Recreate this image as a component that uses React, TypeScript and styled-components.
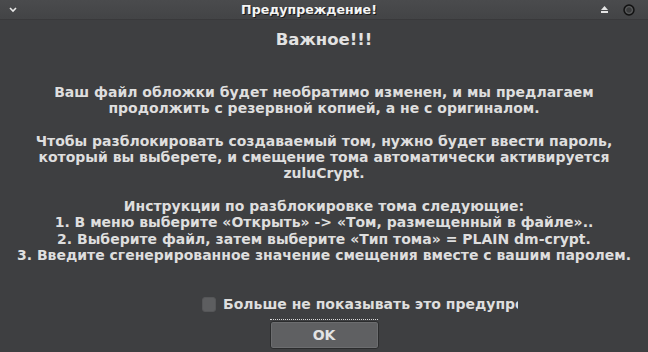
import React from "react";
import styled, { createGlobalStyle } from "styled-components";

const Global = createGlobalStyle`
  html, body { margin: 0; padding: 0; background: #3e3f41; }
  body { width: 648px; height: 352px; overflow: hidden; font-family: "DejaVu Sans", "Liberation Sans", sans-serif; }
`;

const Window = styled.div`
  width: 648px;
  height: 352px;
  display: flex;
  flex-direction: column;
  background: #3e3f41;
  overflow: hidden;
`;

const TitleBar = styled.div`
  height: 19px;
  flex: none;
  display: flex;
  align-items: center;
  padding: 0 13px 0 9px;
  background: linear-gradient(#4a4b4d, #434446);
  border-bottom: 1px solid #39393b;
`;

const Title = styled.div`
  flex: 1;
  line-height: 19px;
  text-align: center;
  font-weight: bold;
  font-size: 12.6px;
  color: #f4f4f4;
  text-shadow: 1px 1px 0 #1b1b1b;
`;

const TitleControls = styled.div`
  display: flex;
  align-items: center;
  gap: 15px;
`;

const Content = styled.div`
  flex: 1;
  display: flex;
  flex-direction: column;
  align-items: center;
  color: #dedede;
  font-weight: bold;
`;

const Heading = styled.div`
  margin-top: 10px;
  font-size: 16.5px;
  line-height: 20px;
  color: #e2e2e2;
`;

const Message = styled.div`
  margin-top: 34px;
  font-size: 14px;
  line-height: 16.3px;
  text-align: center;
  white-space: pre;
`;

const CheckRow = styled.label`
  margin-top: 33px;
  align-self: flex-start;
  margin-left: 202px;
  width: 316px;
  display: flex;
  align-items: center;
  gap: 7px;
  font-size: 14px;
  line-height: 16px;
  overflow: hidden;
  white-space: nowrap;
`;

const Box = styled.span`
  flex: none;
  width: 12px;
  height: 13px;
  border-radius: 3px;
  background: #5d5e60;
  border: 1px solid #555658;
`;

const ButtonWrap = styled.div`
  margin-top: 7px;
  padding-top: 1px;
  border-top: 1px dotted #d8d8d8;
  width: 108px;
  display: flex;
  justify-content: center;
`;

const OkButton = styled.button`
  flex: none;
  width: 109px;
  height: 28px;
  background: #5f6062;
  border: 1px solid #2b2c2d;
  box-shadow: inset 0 0 0 1px #6c6d6f;
  border-radius: 3px;
  color: #e4e4e4;
  font-family: "DejaVu Sans", sans-serif;
  font-weight: bold;
  font-size: 14px;
  padding: 0;
`;

export default function App() {
  return (
    <Window>
      <Global />
      <TitleBar>
        <svg width="8" height="6" viewBox="0 0 8 6">
          <path d="M1 1 L4 4 L7 1" stroke="#e8e8e8" strokeWidth="1.6" fill="none" />
        </svg>
        <Title>Предупреждение!</Title>
        <TitleControls>
          <svg width="7" height="7" viewBox="0 0 7 7">
            <path d="M3.5 0 L7 4 H0 Z" fill="#e4e4e4" />
            <rect x="0" y="5" width="7" height="2" fill="#e4e4e4" />
          </svg>
          <svg width="12" height="12" viewBox="0 0 12 12">
            <circle cx="6" cy="6" r="5" fill="#3a3b3c" stroke="#111" strokeWidth="1.4" />
            <circle cx="6" cy="6" r="3.4" fill="none" stroke="#6a6b6c" strokeWidth="0.8" />
          </svg>
        </TitleControls>
      </TitleBar>
      <Content>
        <Heading>Важное!!!</Heading>
        <Message>
          {"Ваш файл обложки будет необратимо изменен, и мы предлагаем\nпродолжить с резервной копией, а не с оригиналом.\n\nЧтобы разблокировать создаваемый том, нужно будет ввести пароль,\nкоторый вы выберете, и смещение тома автоматически активируется\nzuluCrypt.\n\nИнструкции по разблокировке тома следующие:\n1. В меню выберите «Открыть» -> «Том, размещенный в файле»..\n2. Выберите файл, затем выберите «Тип тома» = PLAIN dm-crypt.\n3. Введите сгенерированное значение смещения вместе с вашим паролем."}
        </Message>
        <CheckRow>
          <Box />
          <span>Больше не показывать это предупреждение</span>
        </CheckRow>
        <ButtonWrap>
          <OkButton>OK</OkButton>
        </ButtonWrap>
      </Content>
    </Window>
  );
}
